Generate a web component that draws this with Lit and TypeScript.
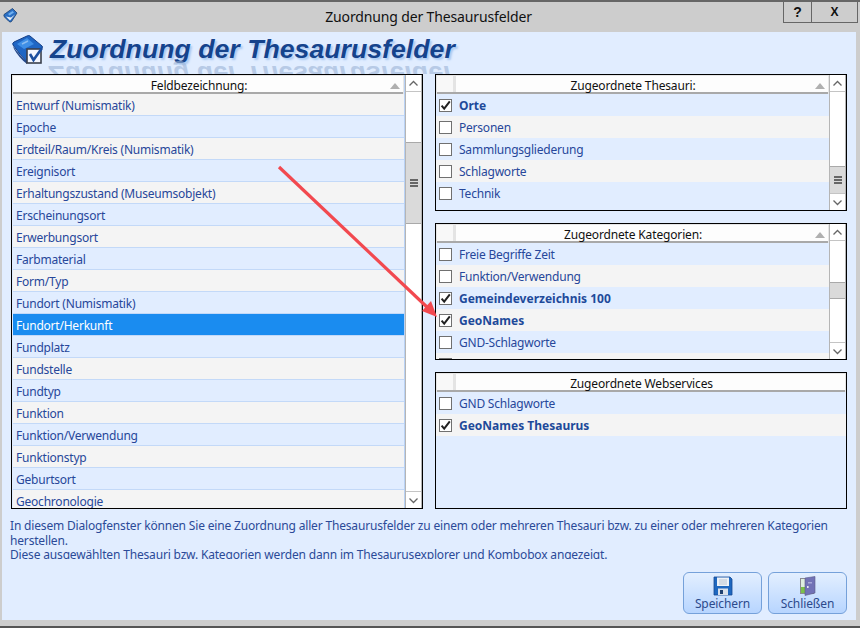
import { LitElement, html, css, svg } from "lit";
import { customElement } from "lit/decorators.js";

type Row = { t: string; c?: boolean; b?: boolean };

const fields: string[] = [
  "Entwurf (Numismatik)", "Epoche", "Erdteil/Raum/Kreis (Numismatik)", "Ereignisort",
  "Erhaltungszustand (Museumsobjekt)", "Erscheinungsort", "Erwerbungsort", "Farbmaterial",
  "Form/Typ", "Fundort (Numismatik)", "Fundort/Herkunft", "Fundplatz", "Fundstelle", "Fundtyp",
  "Funktion", "Funktion/Verwendung", "Funktionstyp", "Geburtsort", "Geochronologie",
];
const thesauri: Row[] = [
  { t: "Orte", c: true, b: true }, { t: "Personen" }, { t: "Sammlungsgliederung" }, { t: "Schlagworte" }, { t: "Technik" },
];
const kategorien: Row[] = [
  { t: "Freie Begriffe Zeit" }, { t: "Funktion/Verwendung" }, { t: "Gemeindeverzeichnis 100", c: true, b: true },
  { t: "GeoNames", c: true, b: true }, { t: "GND-Schlagworte" }, { t: "" },
];
const webservices: Row[] = [{ t: "GND Schlagworte" }, { t: "GeoNames Thesaurus", c: true, b: true }];

@customElement("app-root")
export class AppRoot extends LitElement {
  static styles = css`
    :host { display: block; width: 860px; height: 628px; overflow: hidden; position: relative; background: #cdcdcd;
      font-family: "Noto Sans", sans-serif; font-size: 12px; color: #27479a; }
    .shell { display: flex; flex-direction: column; height: 628px; box-sizing: border-box; border-top: 2px solid #666; border-bottom: 2px solid #555; }
    .titlebar { height: 30px; flex: none; display: flex; position: relative; align-items: flex-start; padding-left: 3px; }
    .titlebar .app { margin-top: 6px; height: 15px; }
    .titlebar .cap { position: absolute; left: 0; right: 3px; top: 6px; text-align: center; font-size: 14px; line-height: 18px; color: #111; letter-spacing: -0.14px; }
    .wbtns { margin-left: auto; margin-right: 2px; display: flex; height: 20px; border: 1px solid #666; border-top: 0; position: relative; }
    .wbtn { font: bold 14px/20px "Liberation Sans", sans-serif; color: #111; text-align: center; }
    .wbtn.q { width: 27px; border-right: 1px solid #666; }
    .wbtn.x { width: 45px; font-size: 12px; }
    .client { flex: 1; margin: 0 4px 6px 2px; background: #e1edff; display: flex; flex-direction: column; padding: 0 9px 6px 9px; min-height: 0; }
    .head { height: 42px; flex: none; display: flex; align-items: flex-start; position: relative; overflow: hidden; }
    .head svg { margin: 3px 0 0 1px; flex: none; }
    .head h1 { margin: 0 0 0 6px; font: italic bold 26.7px/34px "Liberation Sans", sans-serif; color: #15438c; text-shadow: 2px 2px 2px #a9c9f2; white-space: nowrap; }
    .reflect { position: absolute; left: 38px; top: 26px; font: italic bold 26.7px/34px "Liberation Sans", sans-serif; color: #9cb4d6; opacity: .6; transform: scaleY(-1); white-space: nowrap; }
    .columns { display: grid; grid-template-columns: 412px 412px; column-gap: 12px; height: 435px; flex: none; }
    .stack { display: grid; grid-template-rows: 137px 137px 137px; row-gap: 12px; }
    .panel { border: 1px solid #000; display: flex; min-height: 0; background: #e1edff; box-sizing: border-box; overflow: hidden; }
    .main { flex: 1; min-width: 0; display: flex; flex-direction: column; }
    .hdr { height: 18px; flex: none; display: flex; align-items: center; background: #fdfdfd; border: 1px solid #e6e6e6; border-bottom: 0; box-shadow: inset 0 -2px 0 #a9a9a9; line-height: 17px; color: #111; position: relative; letter-spacing: -0.15px; }
    .hdr .mark { width: 16px; height: 16px; flex: none; border-right: 3px solid #e4e4e4; background: #f8f8f8; margin-top: -2px; }
    .hdr .lab { flex: 1; text-align: center; padding-top: 1px; padding-right: 18px; }
    .hdr .sort { position: absolute; right: 3px; top: 7px; width: 0; height: 0; border: 5px solid transparent; border-top: 0; border-bottom: 6px solid #b0b0b0; }
    .rows { flex: 1; overflow: hidden; min-height: 0; }
    .row { height: 22px; box-sizing: border-box; display: flex; align-items: center; background: #e1edff; line-height: 18px; white-space: nowrap; padding: 2px 0 0 3px; letter-spacing: -0.22px; }
    .row.alt { background: #f4f4f4; }
    .row.sel { background: #1a8cf0; color: #fff; }
    .list { border-right: 1px solid #b9d2f5; }
    .list .row { border-bottom: 1px solid #c3d9f8; margin-left: 1px; }
    .box { width: 11px; height: 11px; border: 1px solid #707070; background: #fff; margin: -2px 7px 0 0; flex: none; position: relative; }
    .box svg { position: absolute; left: 0; top: 0; }
    .row.b { font-weight: 700; color: #1e4a9a; letter-spacing: 0; }
    .sb { width: 17px; box-sizing: border-box; flex: none; display: flex; flex-direction: column; background: #fff; border-left: 1px solid #b5b5b5; border-right: 1px solid #b5b5b5; }
    .sb .arr { height: 17px; flex: none; display: flex; align-items: center; justify-content: center; box-sizing: border-box; }
    .sb .arr.up { border-bottom: 1px solid #c4c4c4; }
    .sb .arr.dn { border-top: 1px solid #c4c4c4; }
    .sb .track { flex: 1; min-height: 0; }
    .sb .thumb { background: #dadada; border-top: 1px solid #a9a9a9; border-bottom: 1px solid #a9a9a9; display: flex; align-items: center; justify-content: center; box-sizing: border-box; }
    .grip { width: 8px; height: 8px; background: repeating-linear-gradient(#666 0 2px, transparent 2px 3px); }
    .note { margin: 10px 0 0 -1px; height: 40px; overflow: hidden; line-height: 14.5px; font-size: 12px; color: #2b4a98; flex: none; width: 825px; letter-spacing: -0.17px; }
    .foot { flex: 1; display: flex; justify-content: flex-end; align-items: flex-end; gap: 6px; }
    .btn { width: 79px; height: 42px; box-sizing: border-box; border: 1px solid #75a1da; border-radius: 6px; background: linear-gradient(#e3efff, #b7d5ff); display: flex; flex-direction: column; align-items: center; color: #2c4a8c; line-height: 14px; padding-top: 3px; }
    .btn span { margin-top: 1px; letter-spacing: -0.1px; }
    .arrow { position: absolute; left: 0; top: 0; pointer-events: none; }
  `;

  private chev(up: boolean) {
    return html`<svg width="11" height="7" viewBox="0 0 11 7"><path d=${up ? "M1.5 5.5 L5.5 1.5 L9.5 5.5" : "M1.5 1.5 L5.5 5.5 L9.5 1.5"} fill="none" stroke="#666" stroke-width="1.3"/></svg>`;
  }

  private scrollbar(top: number, h: number, grip = true) {
    return html`<div class="sb">
      <div class="arr up">${this.chev(true)}</div>
      <div class="track"><div class="thumb" style="margin-top:${top}px;height:${h}px">${grip ? html`<div class="grip"></div>` : ""}</div></div>
      <div class="arr dn">${this.chev(false)}</div>
    </div>`;
  }

  private checkPanel(title: string, rows: Row[], bar?: unknown) {
    return html`<section class="panel">
      <div class="main">
        <div class="hdr"><div class="mark"></div><div class="lab">${title}</div>${bar ? html`<div class="sort"></div>` : ""}</div>
        <div class="rows">${rows.map((r, i) => html`<div class="row ${i % 2 ? "alt" : ""} ${r.b ? "b" : ""}">
          <div class="box">${r.c ? svg`<svg width="11" height="11" viewBox="0 0 11 11"><path d="M1.6 5.6 L4.2 8.6 L9.8 1.4" fill="none" stroke="#222" stroke-width="2"/></svg>` : ""}</div>${r.t}</div>`)}</div>
      </div>${bar ?? ""}
    </section>`;
  }

  render() {
    return html`<div class="shell">
      <div class="titlebar">
        <div class="app"><svg width="15" height="15" viewBox="0 0 15 15">
          <path d="M1 6.5 L9.5 .5 L14 5 L8.5 13.5 Q7.5 14.5 6 13.5 L1.5 9 Q.5 7.5 1 6.5Z" fill="#2a6fc4" stroke="#1c3f6e" stroke-width=".8"/>
          <path d="M5 6 L9.5 3 L11 4.5 L6.5 7.5Z" fill="#6fb0f0"/>
          <path d="M3 8.5 L7 12.5 L12 6.5 L8 9.5 Z" fill="#e8eef6"/>
        </svg></div>
        <div class="cap">Zuordnung der Thesaurusfelder</div>
        <div class="wbtns"><div class="wbtn q">?</div><div class="wbtn x">X</div></div>
      </div>
      <div class="client">
        <div class="head">
          <svg width="32" height="30" viewBox="0 0 32 30">
            <path d="M1 10 Q0 8 2 7 L15 1 Q17 0 18 1 L30 11 Q31 12 30 13 L19 26 L15 27 Q8 20 1 10Z" fill="#1f66c4" stroke="#163f86"/>
            <path d="M5 9 L15 3 L22 9 L12 14Z" fill="#3f8fe6"/>
            <path d="M10 9 L16 6" stroke="#8dbdf0" stroke-width="1.5"/>
            <path d="M1 11 Q8 21 15 27 L15 29 Q7 23 2 14Z" fill="#264a8c"/>
            <rect x="15" y="14" width="14" height="14" fill="#f4f7ff" stroke="#3a3f4c" stroke-width="1.6"/>
            <path d="M18 19 L21.5 25 L30 13" fill="none" stroke="#1d4f9f" stroke-width="2.6"/>
          </svg>
          <h1>Zuordnung der Thesaurusfelder</h1>
          <div class="reflect" aria-hidden="true">Zuordnung der Thesaurusfelder</div>
        </div>
        <div class="columns">
          <section class="panel">
            <div class="main list">
              <div class="hdr"><div class="lab">Feldbezeichnung:</div><div class="sort"></div></div>
              <div class="rows">${fields.map((f, i) => html`<div class="row ${i === 10 ? "sel" : i % 2 === 0 ? "alt" : ""}">${f}</div>`)}</div>
            </div>
            ${this.scrollbar(50, 82)}
          </section>
          <div class="stack">
            ${this.checkPanel("Zugeordnete Thesauri:", thesauri, this.scrollbar(74, 28))}
            ${this.checkPanel("Zugeordnete Kategorien:", kategorien, this.scrollbar(41, 17, false))}
            ${this.checkPanel("Zugeordnete Webservices", webservices)}
          </div>
        </div>
        <div class="note">In diesem Dialogfenster können Sie eine Zuordnung aller Thesaurusfelder zu einem oder mehreren Thesauri bzw. zu einer oder mehreren Kategorien herstellen.<br>Diese ausgewählten Thesauri bzw. Kategorien werden dann im Thesaurusexplorer und Kombobox angezeigt.</div>
        <div class="foot">
          <div class="btn">
            <svg width="20" height="20" viewBox="0 0 20 20"><path d="M1 1 H17 L19 3 V19 H1Z" fill="#1f68c0" stroke="#174a92" stroke-width=".8"/><rect x="4" y="1.5" width="12" height="8.5" fill="#eef2f7"/><path d="M6 4H14M6 6H14M6 8H14" stroke="#b9c4d2"/><rect x="5" y="12.5" width="10" height="6.5" fill="#d9e0ea"/><rect x="7" y="14" width="3" height="4" fill="#20406f"/></svg>
            <span>Speichern</span>
          </div>
          <div class="btn">
            <svg width="20" height="20" viewBox="0 0 20 20"><rect x="2" y="2" width="14" height="16" fill="#8a8a90"/><path d="M3 3 H7 V11 H3Z" fill="#dfeee0"/><path d="M3 11 H7 V17 H3Z" fill="#7cc04a"/><path d="M7 2 L17 .5 V17 L7 19.5Z" fill="#7272b6" stroke="#5c5c86" stroke-width=".6"/><rect x="10" y="6" width="4" height="1.5" fill="#a8a8d8"/><rect x="9" y="10" width="1.6" height="2" fill="#e8e8f4"/></svg>
            <span>Schließen</span>
          </div>
        </div>
      </div>
    </div>
    <svg class="arrow" width="860" height="628" viewBox="0 0 860 628">
      <line x1="279" y1="167" x2="428" y2="308" stroke="#f2494f" stroke-width="3.2"/>
      <path d="M437 317 L422 311 L431 301Z" fill="#f2494f"/>
    </svg>`;
  }
}
